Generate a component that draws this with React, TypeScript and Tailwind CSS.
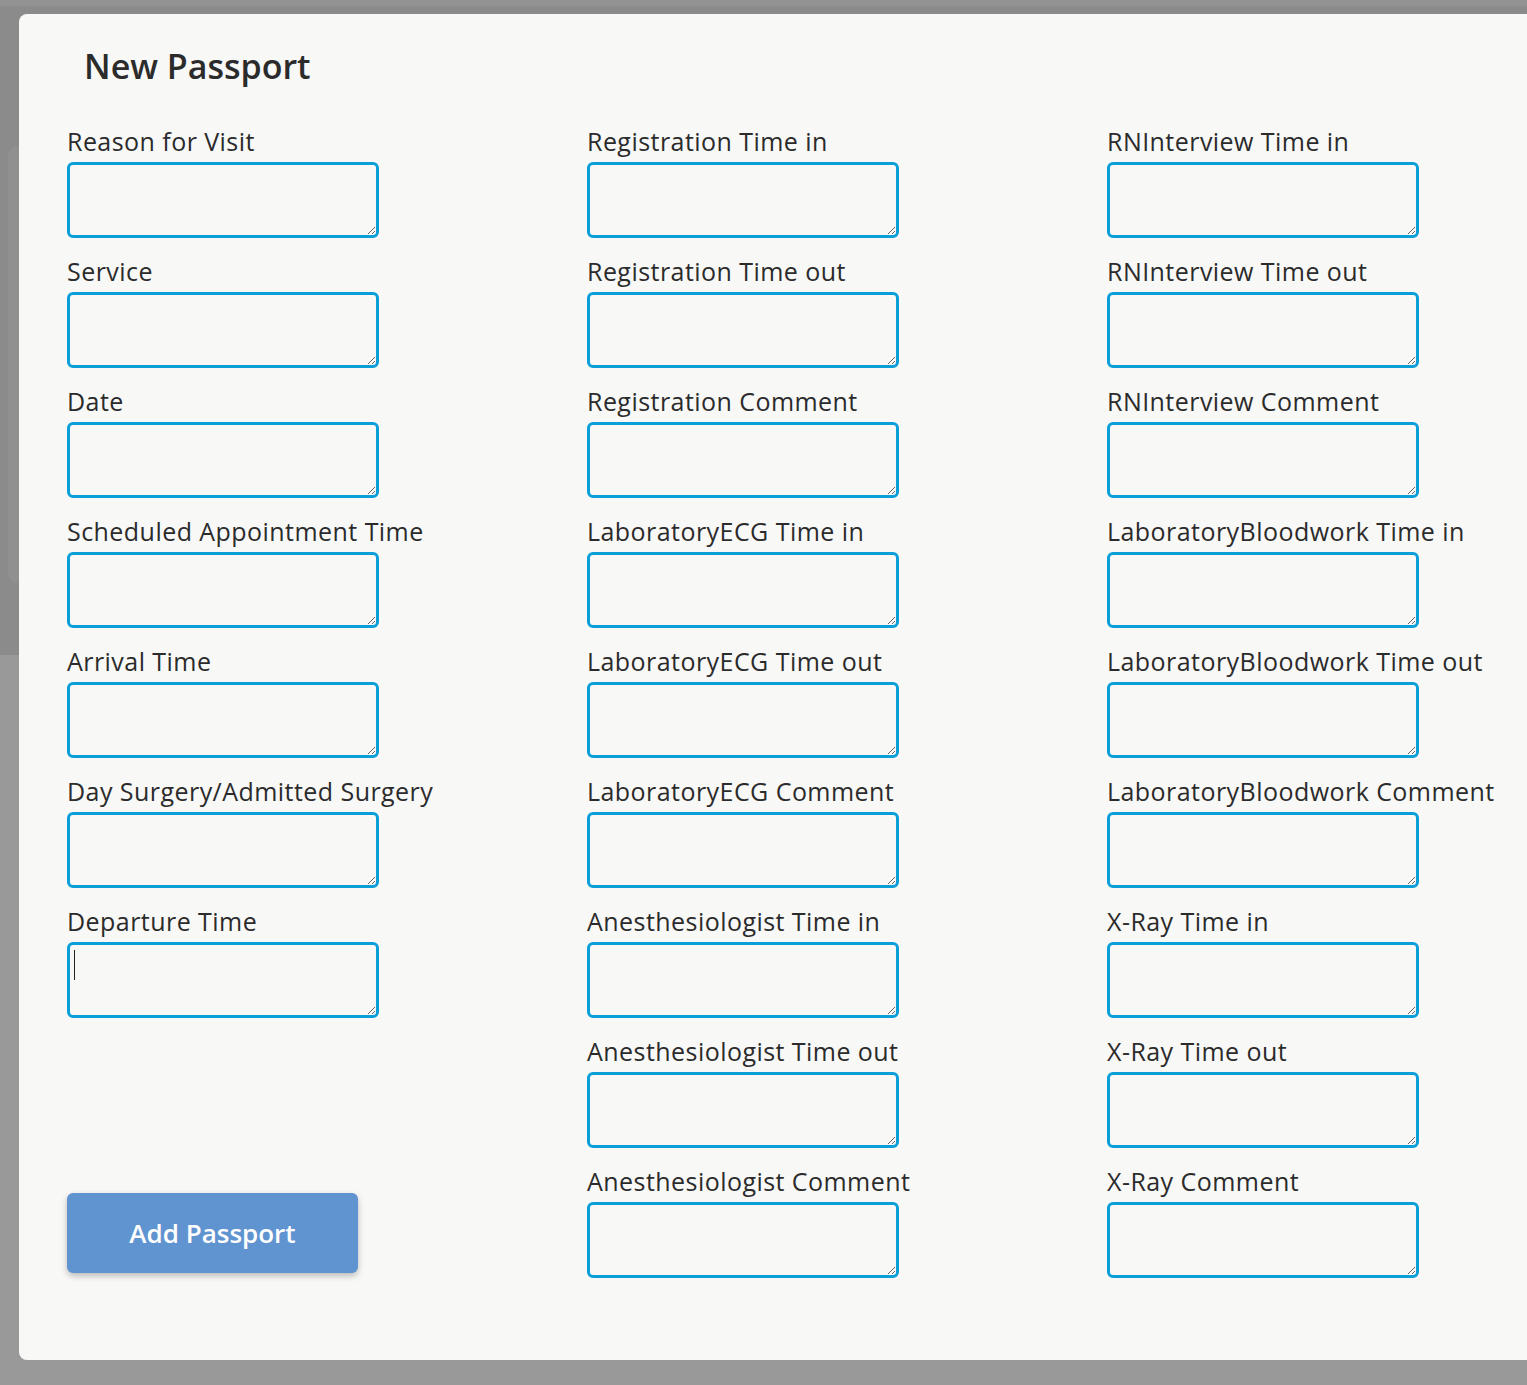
const leftFields = [
  "Reason for Visit",
  "Service",
  "Date",
  "Scheduled Appointment Time",
  "Arrival Time",
  "Day Surgery/Admitted Surgery",
  "Departure Time",
];

const middleFields = [
  "Registration Time in",
  "Registration Time out",
  "Registration Comment",
  "LaboratoryECG Time in",
  "LaboratoryECG Time out",
  "LaboratoryECG Comment",
  "Anesthesiologist Time in",
  "Anesthesiologist Time out",
  "Anesthesiologist Comment",
];

const rightFields = [
  "RNInterview Time in",
  "RNInterview Time out",
  "RNInterview Comment",
  "LaboratoryBloodwork Time in",
  "LaboratoryBloodwork Time out",
  "LaboratoryBloodwork Comment",
  "X-Ray Time in",
  "X-Ray Time out",
  "X-Ray Comment",
];

function Field({ label, caret }: { label: string; caret?: boolean }) {
  return (
    <div className="flex flex-col mb-[20px]">
      <label className="text-[25px] leading-[26px] mb-[8px] text-[#2b2b2b] whitespace-nowrap tracking-[0.45px]">
        {label}
      </label>
      <div className="relative w-[312px] h-[76px]">
        <textarea className="block w-[312px] h-[76px] border-[3px] border-[#0a9fd8] rounded-[6px] bg-transparent outline-none" />
        {caret && (
          <span className="absolute left-[7px] top-[8px] w-[1px] h-[30px] bg-[#222]" />
        )}
      </div>
    </div>
  );
}

export default function App() {
  return (
    <div
      className="relative w-[1527px] h-[1385px] overflow-hidden bg-[#999999]"
      style={{ fontFamily: '"Open Sans", "Noto Sans", sans-serif' }}
    >
      {/* page behind the overlay */}
      <div className="h-[6px] bg-[#939393]" />
      <div className="h-[649px] bg-[#8b8b8b] pt-[140px] pl-[8px]">
        <div className="h-[437px] rounded-l-[10px] bg-[#909090]" />
      </div>

      {/* modal */}
      <div className="absolute left-[19px] top-[14px] w-[1620px] h-[1346px] rounded-[8px] bg-[#f8f8f7] pl-[48px] pt-[28px]">
        <h1 className="ml-[17px] text-[34px] leading-[48px] font-semibold text-[#2b2b2b]">
          New Passport
        </h1>

        <div className="flex mt-[38px]">
          <div className="w-[520px] shrink-0 flex flex-col">
            {leftFields.map((f) => (
              <Field key={f} label={f} caret={f === "Departure Time"} />
            ))}
            <button className="mt-[155px] w-[291px] h-[80px] rounded-[6px] bg-[#6094d1] text-white text-[26px] font-semibold shadow-[0_3px_6px_rgba(0,0,0,0.25)]">
              Add Passport
            </button>
          </div>
          <div className="w-[520px] shrink-0 flex flex-col">
            {middleFields.map((f) => (
              <Field key={f} label={f} />
            ))}
          </div>
          <div className="w-[520px] shrink-0 flex flex-col">
            {rightFields.map((f) => (
              <Field key={f} label={f} />
            ))}
          </div>
        </div>
      </div>
    </div>
  );
}
